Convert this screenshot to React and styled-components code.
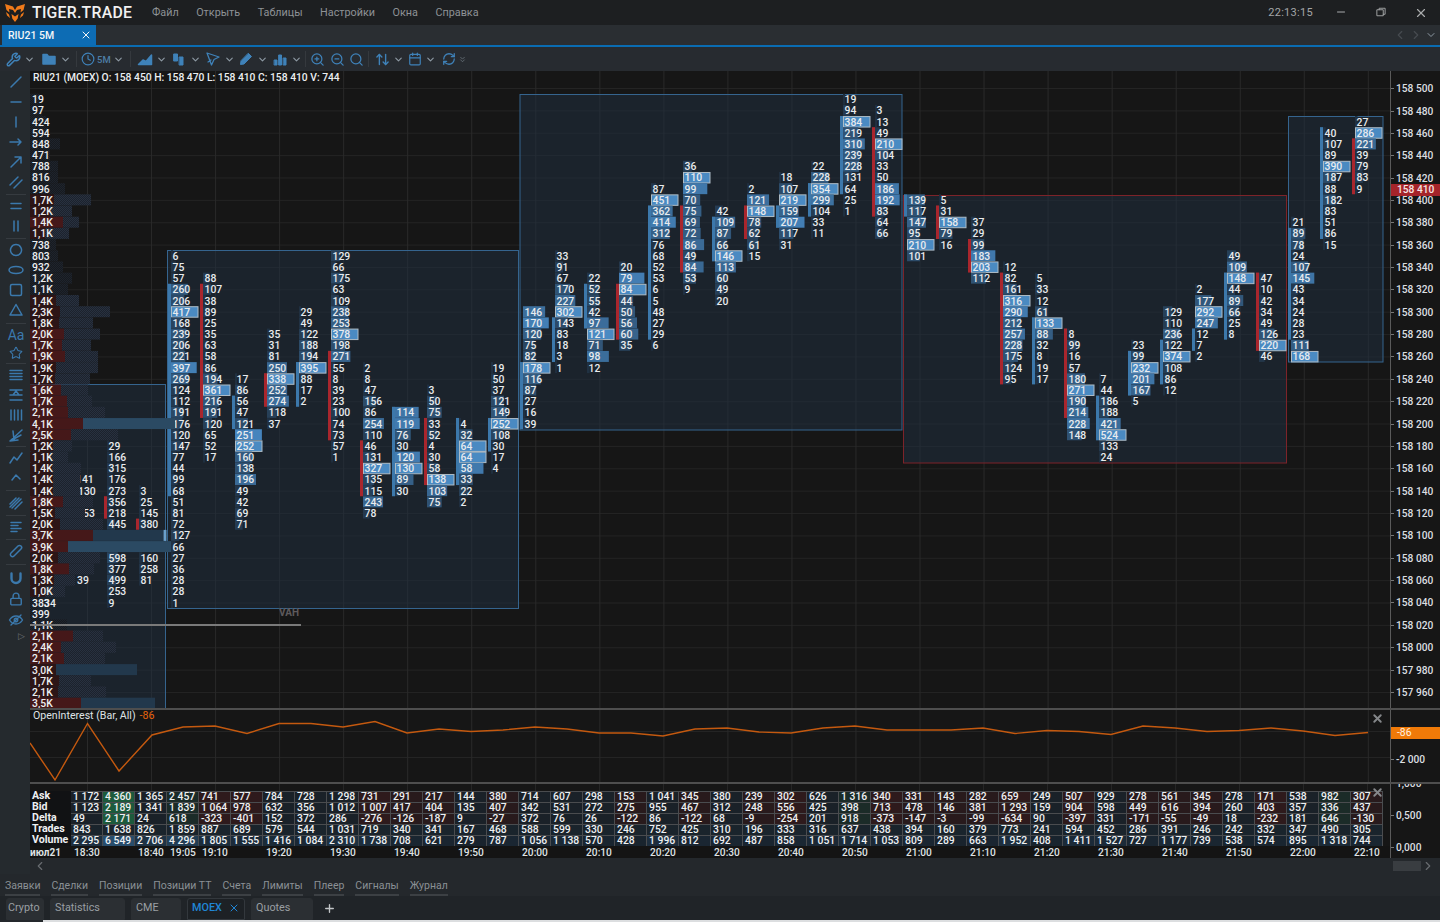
import React from "react";
import styled, { createGlobalStyle } from "styled-components";
import {
  ChevronDown, ChevronLeft, ChevronRight, Clock, Minus, Plus, RefreshCw, Search, Star, Wrench, X, ZoomIn, ZoomOut,
  Calendar, ArrowUpDown, ChevronsDown, Lock,
} from "lucide-react";

const GlobalStyle = createGlobalStyle`
  html, body { margin: 0; padding: 0; background: #24282c; overflow: hidden; }
  * { box-sizing: border-box; }
`;

const FONT = `Roboto, "Liberation Sans", sans-serif`;

const Root = styled.div`
  width: 1440px;
  height: 922px;
  display: flex;
  flex-direction: column;
  font-family: ${FONT};
  color: #e6e9ec;
  background: #24282c;
  overflow: hidden;
`;

/* title bar */
const TitleBar = styled.div`
  height: 25px;
  flex: none;
  display: flex;
  align-items: center;
  background: #1d1f21;
  padding-left: 5px;
`;
const Brand = styled.div`
  width: 101px;
  margin: 0 19px 0 7px;
  font-size: 15.8px;
  font-weight: 500;
  letter-spacing: 0.25px;
  color: #f1f1f1;
  white-space: nowrap;
`;
const MenuItem = styled.span`
  font-size: 10.8px;
  color: #8e9296;
  margin-right: 17.5px;
  white-space: nowrap;
`;
const Clockface = styled.span`
  margin-left: auto;
  font-size: 11px;
  letter-spacing: 0.3px;
  color: #a4a6a8;
`;
const WinButton = styled.span`
  width: 40px;
  display: flex;
  justify-content: center;
  padding-left: 2px;
  color: #a9abad;
`;
const WinButtons = styled.div`
  display: flex;
  margin: 0 0 0 7px;
`;

/* tab strip */
const TabStrip = styled.div`
  height: 22px;
  flex: none;
  display: flex;
  background: #2a2e32;
  border-bottom: 2px solid #0a6cb2;
  padding-left: 2px;
`;
const ChartTab = styled.div`
  width: 94px;
  display: flex;
  align-items: center;
  justify-content: space-between;
  padding: 0 4px 0 6px;
  background: #0d6cb4;
  font-size: 10.5px;
  font-weight: 500;
  color: #f3f6f8;
`;
const StripArrows = styled.div`
  margin-left: auto;
  display: flex;
  align-items: center;
  gap: 2px;
  padding-right: 3px;
  color: #474b50;
`;

/* top toolbar */
const Toolbar = styled.div`
  height: 24px;
  flex: none;
  display: flex;
  align-items: center;
  background: #272b30;
  padding-left: 6px;
  color: #3f82b9;
`;
const ToolPair = styled.div`
  width: ${(p) => p.$w || 34}px;
  flex: none;
  display: flex;
  align-items: center;
  gap: ${(p) => p.$gap ?? 3}px;
`;
const ToolSep = styled.span`
  width: 1px;
  height: 16px;
  flex: none;
  background: #35393e;
  margin-right: ${(p) => p.$m || 4}px;
`;
const Dim = styled.span`
  font-size: 9.5px;
  font-weight: 500;
  color: #4d7ea6;
`;
const Chevron = styled(ChevronDown)`
  color: #8d99a3;
  flex: none;
`;

/* middle */
const Workspace = styled.div`
  flex: 1;
  min-height: 0;
  display: flex;
`;
const LeftTools = styled.div`
  width: 30px;
  flex: none;
  padding: 1px 0 0 2px;
  display: flex;
  flex-direction: column;
  color: #3b79ad;
  background: #252a2e;
`;
const ToolCell = styled.div`
  height: ${(p) => p.$h || 20}px;
  flex: none;
  display: flex;
  align-items: center;
  justify-content: center;
`;
const ToolLine = styled.div`
  height: 1px;
  flex: none;
  margin: ${(p) => p.$m || 1}px 4px;
  background: #363b40;
`;
const AaGlyph = styled.span`
  font-size: 14px;
  line-height: 1;
  color: #3b79ad;
`;
const ExpandHint = styled.div`
  height: 16px;
  flex: none;
  padding-left: 16px;
  font-size: 9px;
  color: #6c7276;
`;
const ChartColumn = styled.div`
  width: 1410px;
  display: flex;
  flex-direction: column;
`;
const PaneRow = styled.div`
  height: ${(p) => p.$h}px;
  flex: none;
  display: flex;
  position: relative;
  overflow: hidden;
`;
const PaneDivider = styled.div`
  height: 2px;
  flex: none;
  background: #4e4e4e;
`;
const Plot = styled.svg`
  display: block;
  width: 1360px;
  height: 100%;
  flex: none;
  background: #161616;
  font-family: ${FONT};
`;
const Axis = styled.div`
  width: 50px;
  flex: none;
  display: flex;
  flex-direction: column;
  background: #161616;
  border-left: 1px solid #5a5a5a;
  padding-top: ${(p) => p.$top || 0}px;
  position: relative;
`;
const AxisLabel = styled.div`
  height: ${(p) => p.$h}px;
  flex: none;
  display: flex;
  align-items: center;
  gap: 2px;
  font-size: 10.2px;
  font-weight: 500;
  color: #dcdfe1;
  white-space: nowrap;
  &::before {
    content: "";
    width: 3px;
    height: 1px;
    background: #777;
  }
`;
const FirstAxisLabel = styled(AxisLabel)`
  margin-top: -17px;
`;
const PriceTag = styled.div`
  position: absolute;
  left: 0;
  top: 113px;
  width: 49px;
  height: 12px;
  line-height: 12px;
  padding-left: 6px;
  background: #a5242a;
  font-size: 10.2px;
  font-weight: 500;
  color: #f6e6e6;
`;
const OiTag = styled.div`
  height: 12px;
  width: 49px;
  flex: none;
  padding-left: 6px;
  line-height: 12px;
  background: #f07a08;
  font-size: 10.4px;
  color: #fff1e0;
  margin-bottom: 7px;
`;
const Candle = styled.text`
  font-size: 10.4px;
  font-weight: 500;
  fill: #e8ebee;
  dominant-baseline: central;
`;
const ProfileText = styled(Candle)`
  fill: #eceef0;
`;
const VahText = styled.text`
  font-size: 10px;
  font-weight: 700;
  fill: #5e5a5c;
  dominant-baseline: central;
`;
const PaneCaption = styled.div`
  position: absolute;
  left: 3px;
  top: 0;
  font-size: 10.6px;
  line-height: 12px;
  color: #dfe3e6;
  white-space: nowrap;
`;
const PaneCaptionValue = styled.span`
  color: #e8650c;
  margin-left: 4px;
`;
const ChartCaption = styled.div`
  position: absolute;
  left: 3px;
  top: 1px;
  font-size: 10.3px;
  font-weight: 500;
  line-height: 12px;
  color: #eceff1;
  white-space: nowrap;
`;
const CloseMark = styled(X)`
  position: absolute;
  left: ${(p) => p.$x}px;
  top: ${(p) => p.$y}px;
  color: #85878a;
`;

/* stats table */
const TablePane = styled.div`
  width: 1360px;
  flex: none;
  padding-top: 7px;
  background-color: #161616;
  background-image: repeating-linear-gradient(90deg, transparent 0 57px, #262626 57px 58px, transparent 58px 64px);
`;
const StatsGrid = styled.div`
  display: grid;
  grid-template-columns: 41px repeat(41, 32px);
  grid-auto-rows: 11px;
`;
const RowName = styled.div`
  background: #111214;
  padding-left: 2px;
  font-size: 10.6px;
  font-weight: 700;
  line-height: 10px;
  color: #eef0f2;
`;
const StatCell = styled.div`
  border: 1px solid #4a4c4f;
  border-width: 1px 1px 0 0;
  background: ${(p) => p.$bg};
  padding-left: 2px;
  font-size: 10.4px;
  font-weight: 500;
  line-height: 10px;
  white-space: nowrap;
  overflow: hidden;
  color: #eef0f2;
`;
const TimeRow = styled.div`
  display: grid;
  grid-template-columns: 41px repeat(41, 32px);
  height: 12px;
  background: #141414;
`;
const DateCell = styled.div`
  font-size: 10px;
  font-weight: 700;
  line-height: 13px;
  color: #dfe2e4;
`;
const TimeCell = styled.div`
  grid-column: ${(p) => p.$col + 2};
  text-align: center;
  font-size: 10.2px;
  font-weight: 500;
  line-height: 14px;
  color: #dfe2e4;
  white-space: nowrap;
`;
const ScrollRow = styled.div`
  height: 15px;
  flex: none;
  display: flex;
  align-items: center;
  background: #24282c;
  color: #686c70;
  padding-left: 3px;
`;
const ScrollThumb = styled.div`
  width: 28px;
  height: 10px;
  margin-left: auto;
  background: #393d41;
`;
const ScrollEnd = styled(ChevronRight)`
  flex: none;
  margin-right: 5px;
`;

/* bottom tabs */
const PanelTabs = styled.div`
  height: 22px;
  flex: none;
  display: flex;
  gap: 11px;
  padding: 5px 0 0 5px;
  background: #24282c;
`;
const PanelTab = styled.div`
  height: 17px;
  font-size: 10.5px;
  line-height: 14px;
  color: #8a9095;
  border-bottom: 2px solid #3c4044;
  white-space: nowrap;
`;
const SpaceTabs = styled.div`
  height: 24px;
  flex: none;
  display: flex;
  gap: 6px;
  align-items: flex-end;
  padding-left: 6px;
  background: #202428;
`;
const SpaceTab = styled.div`
  width: ${(p) => p.$w}px;
  height: 22px;
  display: flex;
  align-items: center;
  justify-content: space-between;
  padding: 0 4px 3px ${(p) => p.$pad ?? 4}px;
  border-radius: 3px 3px 0 0;
  background: ${(p) => (p.$active ? "#1d2125" : "#2b2f33")};
  border: 1px solid ${(p) => (p.$active ? "#33383d" : "#2b2f33")};
  font-size: 10.8px;
  color: ${(p) => (p.$active ? "#2086d6" : "#9a9fa3")};
  font-weight: ${(p) => (p.$active ? 500 : 400)};
`;
const AddTab = styled.div`
  margin: 0 0 2px 4px;
  height: 20px;
  display: flex;
  align-items: center;
  color: #c2c5c8;
`;
const WindowEdge = styled.div`
  height: 2px;
  flex: none;
  margin-left: 43px;
  background: #dcdee0;
`;

/* chart geometry */
const rowY = (k) => 88 + 11.185 * k;
const colX = (n) => 167 + 32 * n;

const mix = (r) => {
  const t = Math.pow(Math.min(1, r), 1.5);
  const ch = (a, b) => Math.round(a + (b - a) * t);
  return `rgb(${ch(31, 70)},${ch(46, 133)},${ch(62, 190)})`;
};

const candles = [
  { n: -2, k: 32, v: [29, 166, 315, 176, 273, 356, 218, 445, null, null, 598, 377, 499, 253, 9], c: "r", from: 37, to: 38, max: 1500 },
  { n: -1, k: 36, v: [3, 25, 145, 380, null, null, 160, 258, 81], c: "r", from: 39, to: 39, max: 1500 },
  { n: 0, k: 15, v: [6, 75, 57, 260, 206, 417, 168, 239, 206, 221, 397, 269, 124, 112, 191, 176, 120, 147, 77, 44, 99, 68, 51, 81, 72, 127, 66, 27, 36, 28, 28, 1], c: "b", from: 18, to: 36 },
  { n: 1, k: 17, v: [88, 107, 38, 89, 25, 35, 63, 58, 86, 194, 361, 216, 191, 120, 65, 52, 17], c: "r", from: 18, to: 29 },
  { n: 2, k: 26, v: [17, 86, 56, 47, 121, 251, 252, 160, 138, 196, 49, 42, 69, 71], c: "b", from: 28, to: 30 },
  { n: 3, k: 22, v: [35, 31, 81, 250, 338, 252, 274, 118, 37], c: "r", from: 26, to: 28 },
  { n: 4, k: 20, v: [29, 49, 122, 188, 194, 395, 88, 17, 2], c: "b", from: 25, to: 28 },
  { n: 5, k: 15, v: [129, 66, 175, 63, 109, 238, 253, 378, 198, 271, 55, 8, 39, 23, 100, 74, 73, 57, 1], c: "r", from: 24, to: 31 },
  { n: 6, k: 25, v: [2, 8, 47, 156, 86, 254, 110, 46, 131, 327, 135, 115, 243, 78], c: "r", from: 32, to: 36 },
  { n: 7, k: 29, v: [114, 119, 76, 30, 120, 130, 89, 30], c: "b", from: 29, to: 36 },
  { n: 8, k: 27, v: [3, 50, 75, 33, 52, 4, 30, 58, 138, 103, 75], c: "r", from: 30, to: 35 },
  { n: 9, k: 30, v: [4, 32, 64, 64, 58, 33, 22, 2], c: "b", from: 30, to: 35 },
  { n: 10, k: 25, v: [19, 50, 37, 121, 149, 252, 108, 30, 17, 4], c: "b", from: 30, to: 32 },
  { n: 11, k: 20, v: [146, 170, 120, 75, 82, 178, 116, 87, 27, 16, 39], c: "b", from: 25, to: 30 },
  { n: 12, k: 15, v: [33, 91, 67, 170, 227, 302, 143, 83, 18, 3, 1], c: "b", from: 21, to: 24 },
  { n: 13, k: 17, v: [22, 52, 55, 42, 97, 121, 71, 98, 12], c: "b", from: 18, to: 21 },
  { n: 14, k: 16, v: [20, 79, 84, 44, 50, 56, 60, 35], c: "r", from: 18, to: 22 },
  { n: 15, k: 9, v: [87, 451, 362, 414, 312, 76, 68, 52, 53, 6, 5, 48, 27, 29, 6], c: "b", from: 11, to: 22 },
  { n: 16, k: 7, v: [36, 110, 99, 70, 75, 69, 72, 86, 49, 84, 53, 9], c: "r", from: 11, to: 16 },
  { n: 17, k: 11, v: [42, 109, 87, 66, 146, 113, 60, 49, 20], c: "b", from: 12, to: 15 },
  { n: 18, k: 9, v: [2, 121, 148, 78, 62, 61, 15], c: "r", from: 11, to: 13 },
  { n: 19, k: 8, v: [18, 107, 219, 159, 207, 117, 31], c: "b", from: 11, to: 12 },
  { n: 20, k: 7, v: [22, 228, 354, 299, 104, 33, 11], c: "b", from: 9, to: 11 },
  { n: 21, k: 1, v: [19, 94, 384, 219, 310, 239, 228, 131, 64, 25, 1], c: "b", from: 3, to: 9 },
  { n: 22, k: 2, v: [3, 13, 49, 210, 104, 33, 50, 186, 192, 83, 64, 66], c: "r", from: 4, to: 11 },
  { n: 23, k: 10, v: [139, 117, 147, 95, 210, 101], c: "b", from: 10, to: 11 },
  { n: 24, k: 10, v: [5, 31, 158, 79, 16], c: "r", from: 11, to: 13 },
  { n: 25, k: 12, v: [37, 29, 99, 183, 203, 112], c: "r", from: 14, to: 16 },
  { n: 26, k: 16, v: [12, 82, 161, 316, 290, 212, 257, 228, 175, 124, 95], c: "r", from: 17, to: 26 },
  { n: 27, k: 17, v: [5, 33, 12, 61, 133, 88, 32, 8, 19, 17], c: "b", from: 21, to: 26 },
  { n: 28, k: 22, v: [8, 99, 16, 57, 180, 271, 190, 214, 228, 148], c: "r", from: 22, to: 29 },
  { n: 29, k: 26, v: [7, 44, 186, 188, 421, 524, 133, 24], c: "b", from: 28, to: 31 },
  { n: 30, k: 23, v: [23, 99, 232, 201, 167, 5], c: "b", from: 24, to: 27 },
  { n: 31, k: 20, v: [129, 110, 236, 122, 374, 108, 86, 12], c: "b", from: 23, to: 26 },
  { n: 32, k: 18, v: [2, 177, 292, 247, 12, 7, 2], c: "b", from: 22, to: 23 },
  { n: 33, k: 15, v: [49, 109, 148, 44, 89, 66, 25, 8], c: "b", from: 17, to: 22 },
  { n: 34, k: 17, v: [47, 10, 42, 34, 49, 126, 220, 46], c: "r", from: 17, to: 23 },
  { n: 35, k: 12, v: [21, 89, 78, 24, 107, 145, 43, 34, 24, 28, 23, 111, 168], c: "b", from: 13, to: 22 },
  { n: 36, k: 4, v: [40, 107, 89, 390, 187, 88, 182, 83, 51, 86, 15], c: "b", from: 4, to: 13 },
  { n: 37, k: 3, v: [27, 286, 221, 39, 79, 83, 9], c: "r", from: 5, to: 9 },
];

// label, red end, row end
const profile = [
  ["19", 0, 40], ["97", 0, 42], ["424", 0, 46], ["594", 0, 48], ["848", 0, 60], ["471", 0, 50], ["788", 0, 58], ["816", 0, 58], ["996", 0, 65],
  ["1,7K", 54, 91], ["1,2K", 50, 72], ["1,4K", 63, 79], ["1,1K", 45, 69], ["738", 0, 56], ["803", 0, 58], ["932", 0, 63], ["1,2K", 0, 72], ["1,1K", 0, 68],
  ["1,4K", 56, 79], ["2,3K", 60, 110], ["1,8K", 59, 93], ["2,0K", 64, 100], ["1,7K", 62, 91], ["1,9K", 65, 98], ["1,9K", 56, 98], ["1,7K", 55, 90],
  ["1,6K", 61, 88], ["1,7K", 67, 92], ["2,1K", 68, 105], ["4,1K", 83, 175, 2], ["2,5K", 71, 118], ["1,2K", 53, 72], ["1,1K", 50, 68], ["1,4K", 52, 81],
  ["1,4K", 53, 80], ["1,4K", 53, 80], ["1,8K", 63, 93], ["1,5K", 55, 85], ["2,0K", 60, 103], ["3,7K", 93, 163, 1], ["3,9K", 68, 171, 2], ["2,0K", 58, 100],
  ["1,8K", 69, 94], ["1,3K", 54, 75], ["1,0K", 45, 65], ["383", 0, 38], ["399", 0, 38], ["1,1K", 0, 67], ["2,1K", 73, 103], ["2,4K", 61, 116], ["2,1K", 64, 105],
  ["3,0K", 56, 137, 1], ["1,7K", 59, 91], ["2,1K", 58, 106], ["3,5K", 81, 155, 1],
];

const looseNumbers = [
  ["141", 76, 35], ["130", 78, 36], ["53", 83, 38], ["39", 77, 44], ["34", 44, 46],
];

const boxes = [
  { x: 30, y: 384.5, w: 135.5, h: 340, red: false },
  { x: 167.5, y: 250.5, w: 351, h: 358, red: false },
  { x: 520, y: 94.5, w: 382, h: 335.5, red: false },
  { x: 903.5, y: 195.5, w: 383, h: 267.5, red: true },
  { x: 1288.5, y: 116.5, w: 94.5, h: 245.5, red: false },
];

const prices = Array.from({ length: 28 }, (_, i) => 158500 - i * 20);
const fmtPrice = (p) => `${String(p).slice(0, 3)} ${String(p).slice(3)}`;

const oiLine = [
  [30, 743], [55, 780], [87.5, 723.5], [119, 771], [152, 735], [183, 727], [215, 726], [247, 733.5], [279, 723.5], [311, 723.5], [343, 727], [375, 721.5],
  [407, 733], [439, 729], [471, 731.5], [503, 730], [535, 727], [567, 729], [599, 733], [631, 733], [663, 736], [695, 729], [727, 728], [759, 732], [791, 733],
  [823, 728], [855, 726], [887, 730], [919, 730], [951, 730], [983, 728], [1015, 733.5], [1047, 730.5], [1079, 731.5], [1111, 734.5], [1143, 726], [1175, 728],
  [1207, 731.5], [1239, 730.5], [1271, 728], [1303, 731], [1335, 735.5], [1368, 732.5],
];

const ask = ["1 172", "4 360", "1 365", "2 457", "741", "577", "784", "728", "1 298", "731", "291", "217", "144", "380", "714", "607", "298", "153", "1 041", "345", "380", "239", "302", "626", "1 316", "340", "331", "143", "282", "659", "249", "507", "929", "278", "561", "345", "278", "171", "538", "982", "307"];
const bid = ["1 123", "2 189", "1 341", "1 839", "1 064", "978", "632", "356", "1 012", "1 007", "417", "404", "135", "407", "342", "531", "272", "275", "955", "467", "312", "248", "556", "425", "398", "713", "478", "146", "381", "1 293", "159", "904", "598", "449", "616", "394", "260", "403", "357", "336", "437"];
const delta = ["49", "2 171", "24", "618", "-323", "-401", "152", "372", "286", "-276", "-126", "-187", "9", "-27", "372", "76", "26", "-122", "86", "-122", "68", "-9", "-254", "201", "918", "-373", "-147", "-3", "-99", "-634", "90", "-397", "331", "-171", "-55", "-49", "18", "-232", "181", "646", "-130"];
const trades = ["843", "1 638", "826", "1 859", "887", "689", "579", "544", "1 031", "719", "340", "341", "167", "468", "588", "599", "330", "246", "752", "425", "310", "196", "333", "316", "637", "438", "394", "160", "379", "773", "241", "594", "452", "286", "391", "246", "242", "332", "347", "490", "305"];
const volume = ["2 295", "6 549", "2 706", "4 296", "1 805", "1 555", "1 416", "1 084", "2 310", "1 738", "708", "621", "279", "787", "1 056", "1 138", "570", "428", "1 996", "812", "692", "487", "858", "1 051", "1 714", "1 053", "809", "289", "663", "1 952", "408", "1 411", "1 527", "727", "1 177", "739", "538", "574", "895", "1 318", "744"];

const num = (s) => parseInt(s.replace(/\s/g, ""), 10);

const sideTone = (i) => {
  const d = num(delta[i]);
  if (i === 1) return "#1d5a3c";
  if (d < -200) return "#2e1a1c";
  if (d < 0) return "#281a1c";
  if (d > 600) return "#1b2b28";
  return "#1a2128";
};
const volumeTone = (i) => {
  const t = Math.min(1, num(volume[i]) / 6549);
  return `rgb(${Math.round(24 + 16 * t)},${Math.round(33 + 44 * t)},${Math.round(42 + 66 * t)})`;
};

const statRows = [
  ["Ask", ask, sideTone],
  ["Bid", bid, sideTone],
  ["Delta", delta, sideTone],
  ["Trades", trades, () => "#1a242c"],
  ["Volume", volume, volumeTone],
];

const timeLabels = [
  ["18:30", 0], ["18:40", 2], ["19:05", 3], ["19:10", 4], ["19:20", 6], ["19:30", 8], ["19:40", 10], ["19:50", 12], ["20:00", 14], ["20:10", 16], ["20:20", 18],
  ["20:30", 20], ["20:40", 22], ["20:50", 24], ["21:00", 26], ["21:10", 28], ["21:20", 30], ["21:30", 32], ["21:40", 34], ["21:50", 36], ["22:00", 38], ["22:10", 40],
];

const Logo = () => (
  <svg width="20" height="18" viewBox="0 0 20 18" fill="#f07a1a">
    <path d="M0 0l8 2.500L10 6l2-3.500L20 0l-1.500 6-3 2.500.5-3.500-4 1-2 3-2-3-4-1 .5 3.500-3-2.500z" />
    <path d="M1 8l3 2.500 1 3.500-3-2.500zM19 8l-3 2.500-1 3.500 3-2.500z" />
    <path d="M6.500 10l3.500 2.500 3.500-2.500-.8 4.500L10 18l-2.700-3.500z" />
  </svg>
);

const Glyph = ({ d, w = 1.5, size = 16, fill = "none" }) => (
  <svg width={size} height={size} viewBox="0 0 16 16" fill={fill} stroke="currentColor" strokeWidth={w} strokeLinecap="round" strokeLinejoin="round">
    <path d={d} />
  </svg>
);

const chev = <Chevron size={11} strokeWidth={2.5} />;

const leftGroups = [
  { items: ["M3 13L13 3", "M3 8H13", "M8 3V13", "M2 8H13M10 5l3 3-3 3", "M3 13L13 3M7 3h6v6", "M2 11L10 3M6 14L14 6"], m: 1.5 },
  { items: ["M3 5.500H13M3 10.500H13", "M6 3V13M10 3V13"], m: 1.5 },
  { items: ["M8 2.500a5.500 5.500 0 1 0 .01 0z", "M8 4.500c4 0 7 1.500 7 3.500s-3 3.500-7 3.500-7-1.500-7-3.500 3-3.500 7-3.500z", "M4 2.500h8a1.500 1.500 0 0 1 1.500 1.500v8a1.500 1.500 0 0 1-1.500 1.500H4A1.500 1.500 0 0 1 2.500 12V4A1.500 1.500 0 0 1 4 2.500z", "M8 2.500L14 13H2z"], m: 2.5 },
];
const lowerGroups = [
  { items: ["M2 3.500H14M2 6.500H14M2 9.500H14M2 12.500H14", "M2 3H14M2 8H14M2 13H14M5 8l3-4 3 4", "M3 3V13M6.500 3V13M10 3V13M13.500 3V13", "M2 14L14 3M2 14L13 8M2 14L10 13M5 4l1 9"], m: 1 },
  { items: ["M2 13L6 7l3 3 5-7", "M4 10l4-5 4 4"], m: 2 },
  { items: ["M2 9L8 3M2 12L11 3M4 13L13 4M7 14L14 7"], m: 1.5 },
  { items: ["M3 3.500H13M3 6.500H10M3 9.500H13M3 12.500H9"], m: 1.5 },
  { items: ["M3 10L10 3a2 2 0 0 1 3 3L6 13a2 2 0 0 1-3-3z"], m: 2.5 },
];

const ChartBody = () => (
  <Plot viewBox="30 71 1360 637" preserveAspectRatio="none">
    <defs>
      <pattern id="dither" width="2" height="2" patternUnits="userSpaceOnUse">
        <rect width="2" height="2" fill="#1c222c" />
        <rect width="1" height="1" fill="#283140" />
        <rect x="1" y="1" width="1" height="1" fill="#283140" />
      </pattern>
      <pattern id="ditherDim" width="2" height="2" patternUnits="userSpaceOnUse">
        <rect width="2" height="2" fill="#171a1f" />
        <rect width="1" height="1" fill="#1e242d" />
        <rect x="1" y="1" width="1" height="1" fill="#1e242d" />
      </pattern>
    </defs>
    {prices.map((p, i) => (
      <line key={p} x1="30" x2="1390" y1={rowY(i * 2) + 0.5} y2={rowY(i * 2) + 0.5} stroke="#242424" />
    ))}
    {Array.from({ length: 21 }, (_, i) => 87.5 + i * 64.04).map((x) => (
      <line key={x} x1={x} x2={x} y1="71" y2="708" stroke="#2a2a2a" />
    ))}
    {boxes.map((b) => (
      <rect
        key={b.x}
        x={b.x}
        y={b.y}
        width={b.w}
        height={b.h}
        fill="rgba(31,48,66,0.5)"
        stroke={b.red ? "#7d2329" : "#35648e"}
      />
    ))}
    {candles.map((c) => {
      const x = colX(c.n);
      const top = Math.max(...c.v.filter(Boolean));
      const max = c.max || top;
      return (
        <g key={c.n}>
          <rect
            x={x + 1}
            y={rowY(c.from) - 5.6}
            width="3"
            height={rowY(c.to) - rowY(c.from) + 11.2}
            fill={c.c === "r" ? "#a9262d" : "#3c78ab"}
          />
          {c.v.map((v, i) => {
            if (v === null) return null;
            const y = rowY(c.k + i);
            const isPoc = !c.max && v === top;
            return (
              <g key={i}>
                {isPoc ? (
                  <rect x={x + 4.5} y={y - 5} width="26.5" height="10.5" fill="#4a8ac2" stroke="#aebcc6" />
                ) : (
                  <rect x={x + 4} y={y - 5.5} width={Math.max(2, (27 * v) / max)} height="11" fill={mix(v / max)} />
                )}
                <Candle x={x + 5.5} y={y + 0.5}>{v}</Candle>
              </g>
            );
          })}
        </g>
      );
    })}
    {looseNumbers.map(([t, x, k]) => (
      <Candle key={t} x={x} y={rowY(k) + 0.5}>{t}</Candle>
    ))}
    {profile.map(([label, red, end, tone], i) => {
      const y = rowY(i + 1);
      const blue = tone === 2 ? "#2b4a63" : tone === 1 ? "#22384c" : red > 0 ? "url(#dither)" : "url(#ditherDim)";
      return (
        <g key={i}>
          <rect x={Math.max(30, red)} y={y - 5.5} width={end - Math.max(30, red)} height="11" fill={blue} />
          {red > 0 && (
            <rect x="30" y={y - 5.5} width={red - 30} height="11" fill={red > 60 ? "#451819" : "#2d1516"} />
          )}
        </g>
      );
    })}
    <rect x="163.5" y={rowY(40) - 5.5} width="3" height="11" fill="#6aa0cc" />
    {profile.map(([label], i) => (
      <ProfileText key={i} x="32" y={rowY(i + 1) + 0.5}>{label}</ProfileText>
    ))}
    <line x1="30" x2="301" y1="625" y2="625" stroke="#7a7a7a" strokeWidth="2" />
    <VahText x="279" y="612">VAH</VahText>
  </Plot>
);

export default function App() {
  return (
    <Root>
      <GlobalStyle />
      <TitleBar>
        <Logo />
        <Brand>TIGER.TRADE</Brand>
        <MenuItem>Файл</MenuItem>
        <MenuItem>Открыть</MenuItem>
        <MenuItem>Таблицы</MenuItem>
        <MenuItem>Настройки</MenuItem>
        <MenuItem>Окна</MenuItem>
        <MenuItem>Справка</MenuItem>
        <Clockface>22:13:15</Clockface>
        <WinButtons>
          <WinButton><Minus size={12} /></WinButton>
          <WinButton>
            <Glyph size={12} w={1.2} d="M3 5h8v8H3zM5.500 5V3h8v8h-2.500" />
          </WinButton>
          <WinButton><X size={14} /></WinButton>
        </WinButtons>
      </TitleBar>

      <TabStrip>
        <ChartTab>
          RIU21 5M
          <X size={12} />
        </ChartTab>
        <StripArrows>
          <ChevronLeft size={14} />
          <ChevronRight size={14} />
          <ChevronDown size={12} color="#8d99a3" />
        </StripArrows>
      </TabStrip>

      <Toolbar>
        <ToolPair $w={35}><Wrench size={15} strokeWidth={2.4} />{chev}</ToolPair>
        <ToolPair $w={35}>
          <Glyph fill="currentColor" d="M2 3.500h4l1.500 2H14v7.500H2z" />
          {chev}
        </ToolPair>
        <ToolSep />
        <ToolPair $w={49} $gap={2}>
          <Clock size={14} strokeWidth={2} />
          <Dim>5M</Dim>
          {chev}
        </ToolPair>
        <ToolSep $m={6} />
        <ToolPair>
          <Glyph fill="currentColor" d="M1.500 13.500L6 9l3 1.500 5.500-6.500v9.500z" />
          {chev}
        </ToolPair>
        <ToolPair>
          <Glyph fill="currentColor" w={1} d="M3 3h3.500v7H3zM8.500 6H12v8H8.500z" />
          {chev}
        </ToolPair>
        <ToolPair $w={33}>
          <Glyph w={1.3} d="M2 2l12 4-5 2.500L6.500 14zM6 9l-3 2" />
          {chev}
        </ToolPair>
        <ToolPair>
          <Glyph fill="currentColor" w={1} d="M10.500 2.500l3 3L6 13l-3.500.5.500-3.500z" />
          {chev}
        </ToolPair>
        <ToolPair $w={33}>
          <Glyph fill="currentColor" w={1} d="M2.500 9h2.500v5H2.500zM7 4h2.500v10H7zM11.500 7H14v7h-2.500z" />
          {chev}
        </ToolPair>
        <ToolSep />
        <ToolPair $w={20}><ZoomIn size={15} strokeWidth={2} /></ToolPair>
        <ToolPair $w={19}><ZoomOut size={15} strokeWidth={2} /></ToolPair>
        <ToolPair $w={19}><Search size={15} strokeWidth={2} /></ToolPair>
        <ToolSep $m={6} />
        <ToolPair $w={33}><ArrowUpDown size={15} strokeWidth={2.2} />{chev}</ToolPair>
        <ToolPair $w={34}><Calendar size={14} strokeWidth={2} />{chev}</ToolPair>
        <ToolPair $w={16}><RefreshCw size={14} strokeWidth={2.2} /></ToolPair>
        <ChevronsDown size={9} color="#6d7880" />
      </Toolbar>

      <Workspace>
        <LeftTools>
          {leftGroups.map((g, gi) => (
            <React.Fragment key={gi}>
              {g.items.map((d, i) => (
                <ToolCell key={i}><Glyph d={d} /></ToolCell>
              ))}
              <ToolLine $m={g.m} />
            </React.Fragment>
          ))}
          <ToolCell $h={18}><AaGlyph>Aa</AaGlyph></ToolCell>
          <ToolCell $h={18}><Star size={14} strokeWidth={1.8} /></ToolCell>
          <ToolLine />
          {lowerGroups.map((g, gi) => (
            <React.Fragment key={gi}>
              {g.items.map((d, i) => (
                <ToolCell key={i}><Glyph d={d} /></ToolCell>
              ))}
              <ToolLine $m={g.m} />
            </React.Fragment>
          ))}
          <ToolCell $h={21}>
            <Glyph w={2.4} d="M3.500 3.500v5a4.500 4.500 0 0 0 9 0v-5" />
          </ToolCell>
          <ToolCell $h={21}><Lock size={14} strokeWidth={2.4} /></ToolCell>
          <ToolCell $h={22}>
            <Glyph w={1.4} d="M1.500 8s2.500-4 6.500-4 6.500 4 6.500 4-2.500 4-6.500 4-6.500-4-6.500-4zM3 13L13 3M8 6.200a1.800 1.800 0 1 0 .01 0z" />
          </ToolCell>
          <ExpandHint>▷</ExpandHint>
        </LeftTools>

        <ChartColumn>
          <PaneRow $h={637}>
            <ChartBody />
            <ChartCaption>RIU21 (MOEX) O: 158 450 H: 158 470 L: 158 410 C: 158 410 V: 744</ChartCaption>
            <Axis $top={6.5}>
              {prices.map((p) => (
                <AxisLabel key={p} $h={22.37}>{fmtPrice(p)}</AxisLabel>
              ))}
              <PriceTag>158 410</PriceTag>
            </Axis>
          </PaneRow>
          <PaneDivider />
          <PaneRow $h={72}>
            <Plot viewBox="30 710 1360 72" preserveAspectRatio="none">
              <line x1="30" x2="1390" y1="731.5" y2="731.5" stroke="#242424" />
              <line x1="30" x2="1390" y1="757.5" y2="757.5" stroke="#242424" />
              {Array.from({ length: 21 }, (_, i) => 87.5 + i * 64.04).map((x) => (
                <line key={x} x1={x} x2={x} y1="710" y2="782" stroke="#2a2a2a" />
              ))}
              <polyline points={oiLine.map((p) => p.join(",")).join(" ")} fill="none" stroke="#c4590f" strokeWidth="1.4" />
            </Plot>
            <PaneCaption>
              OpenInterest (Bar, All)
              <PaneCaptionValue>-86</PaneCaptionValue>
            </PaneCaption>
            <CloseMark size={13} strokeWidth={3.5} $x={1341} $y={2} />
            <Axis $top={17}>
              <OiTag>-86</OiTag>
              <AxisLabel $h={26}>-2 000</AxisLabel>
            </Axis>
          </PaneRow>
          <PaneDivider />
          <PaneRow $h={74}>
            <TablePane>
              <StatsGrid>
                {statRows.map(([name, vals, tone]) => (
                  <React.Fragment key={name}>
                    <RowName>{name}</RowName>
                    {vals.map((v, i) => (
                      <StatCell key={i} $bg={tone(i)}>{v}</StatCell>
                    ))}
                  </React.Fragment>
                ))}
              </StatsGrid>
              <TimeRow>
                <DateCell>июл21</DateCell>
                {timeLabels.map(([t, col]) => (
                  <TimeCell key={t} $col={col}>{t}</TimeCell>
                ))}
              </TimeRow>
            </TablePane>
            <CloseMark size={13} strokeWidth={3.5} $x={1341} $y={2} />
            <Axis>
              <FirstAxisLabel $h={32}>1,000</FirstAxisLabel>
              <AxisLabel $h={32}>0,500</AxisLabel>
              <AxisLabel $h={32}>0,000</AxisLabel>
            </Axis>
          </PaneRow>
          <ScrollRow>
            <ChevronLeft size={14} />
            <ScrollThumb />
            <ScrollEnd size={14} />
          </ScrollRow>
        </ChartColumn>
      </Workspace>

      <PanelTabs>
        {["Заявки", "Сделки", "Позиции", "Позиции ТТ", "Счета", "Лимиты", "Плеер", "Сигналы", "Журнал"].map((t) => (
          <PanelTab key={t}>{t}</PanelTab>
        ))}
      </PanelTabs>
      <SpaceTabs>
        <SpaceTab $w={38} $pad={1}>Crypto</SpaceTab>
        <SpaceTab $w={75}>Statistics</SpaceTab>
        <SpaceTab $w={50}>CME</SpaceTab>
        <SpaceTab $w={58} $active>
          MOEX
          <X size={12} />
        </SpaceTab>
        <SpaceTab $w={62}>Quotes</SpaceTab>
        <AddTab><Plus size={13} strokeWidth={2.5} /></AddTab>
      </SpaceTabs>
      <WindowEdge />
    </Root>
  );
}
